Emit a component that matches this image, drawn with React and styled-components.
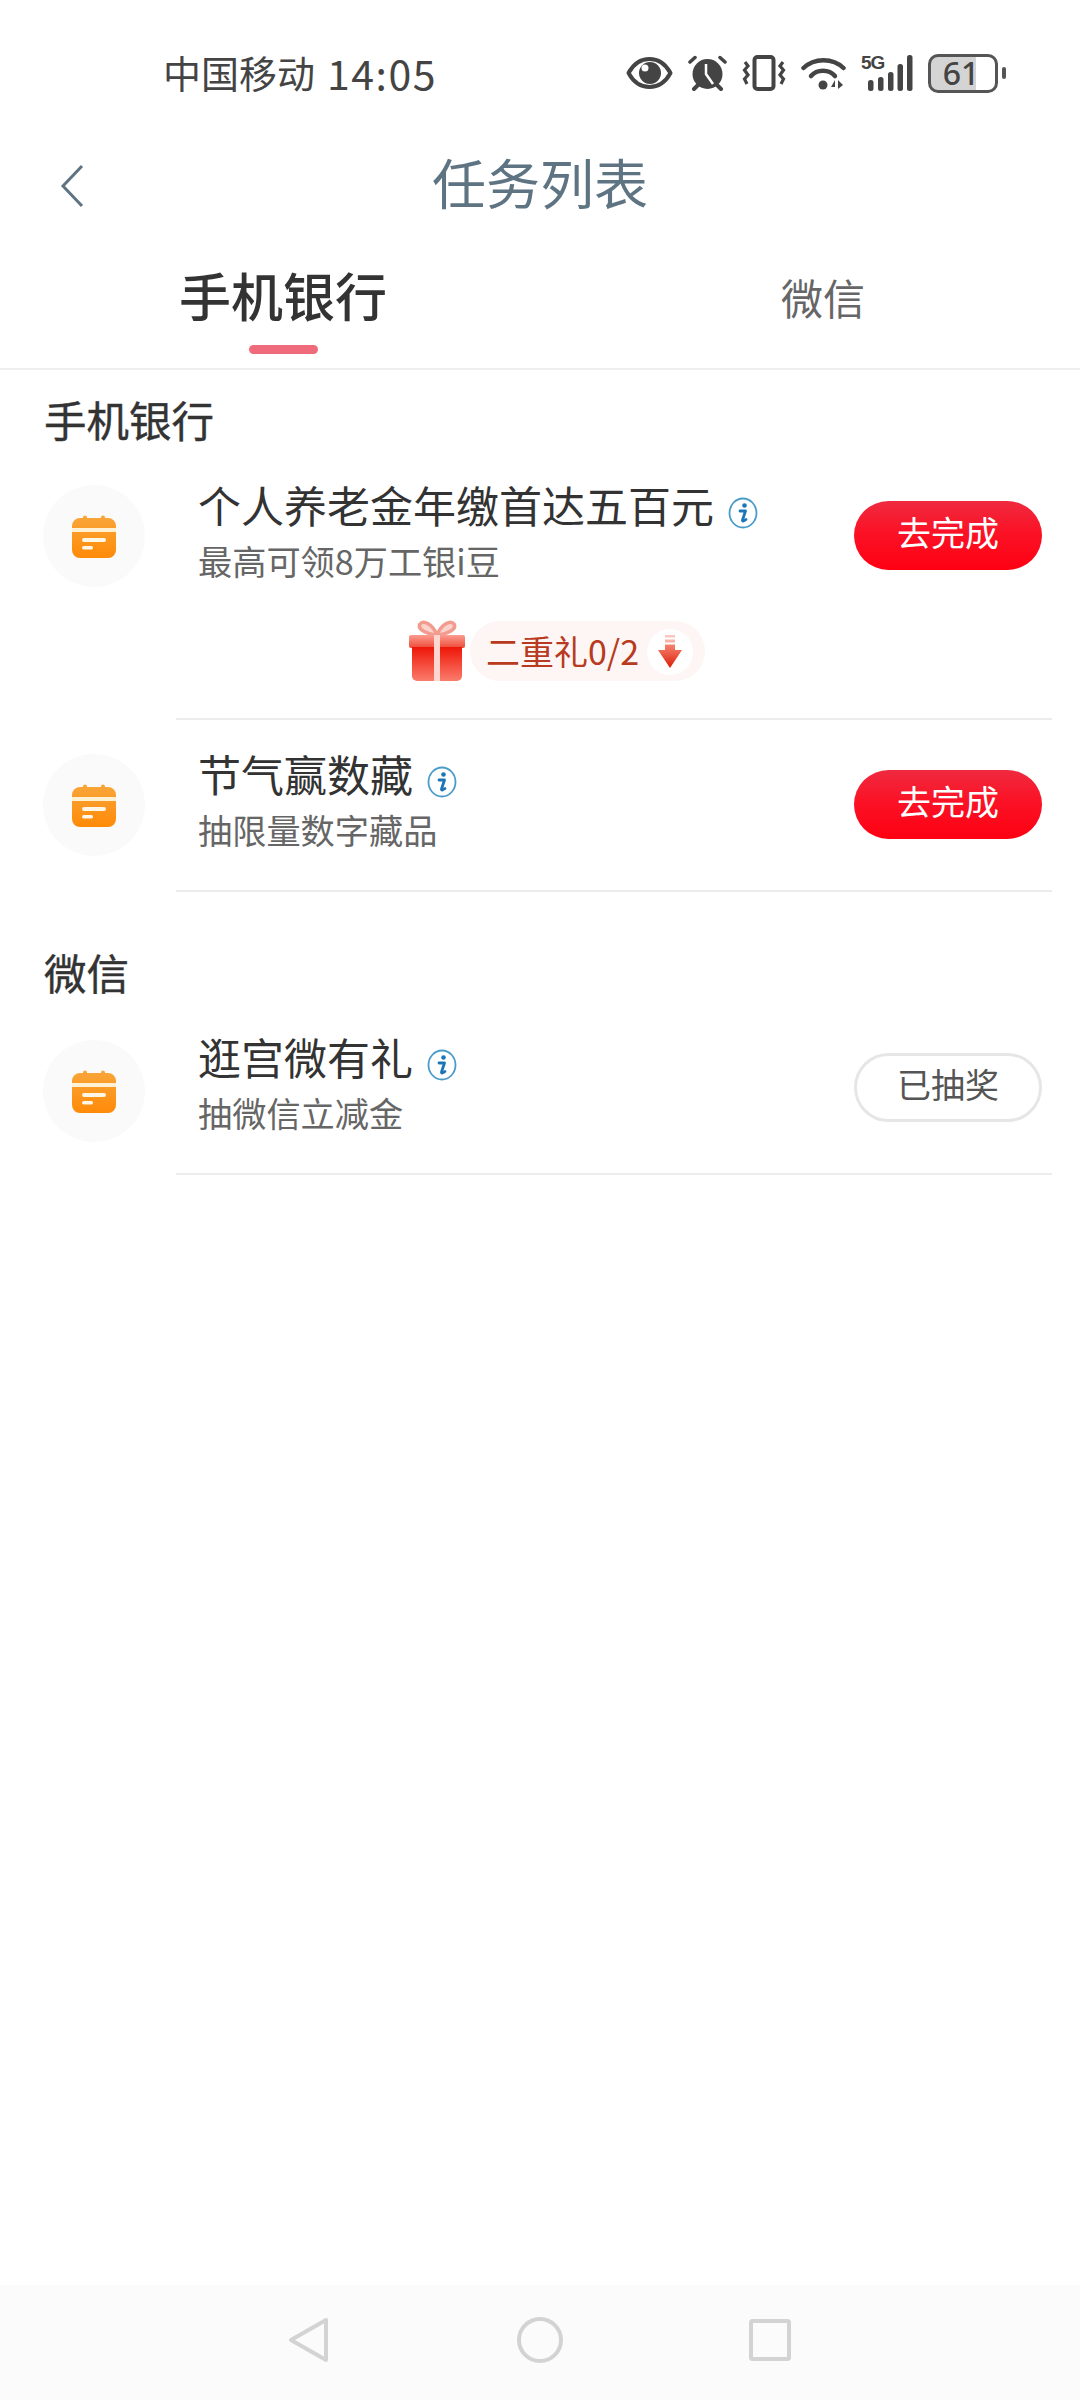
import React from 'react';
import styled, { createGlobalStyle } from 'styled-components';

const GlobalStyle = createGlobalStyle`
	html, body {
		margin: 0;
		padding: 0;
		background: #fff;
	}
	* {
		box-sizing: border-box;
	}
`;

const Page = styled.div`
	display: flex;
	flex-direction: column;
	width: 1080px;
	height: 2400px;
	overflow: hidden;
	background: #fff;
	font-family: 'Noto Sans CJK SC', 'Noto Sans', sans-serif;
	color: #333;
`;

const StatusBar = styled.div`
	display: flex;
	align-items: center;
	height: 146px;
	padding: 0 74px 0 163px;
	color: #444;
`;

const Carrier = styled.span`
	font-size: 38px;
	line-height: 46px;
	margin: 0 12px 3px 0;
`;

const Clock = styled.span`
	font-size: 41px;
	line-height: 46px;
	letter-spacing: 1.500px;
	margin-bottom: 3px;
`;

const StatusIcons = styled.div`
	display: flex;
	align-items: center;
	gap: 15px;
	margin-left: auto;
`;

const Signal = styled.div`
	position: relative;
	width: 52px;
	height: 36px;
`;

const SignalLabel = styled.span`
	position: absolute;
	left: 0;
	top: -2px;
	font-family: 'Liberation Sans', sans-serif;
	font-size: 19px;
	line-height: 20px;
	font-weight: 700;
	letter-spacing: -1px;
	color: #444;
`;

const Battery = styled.div`
	display: flex;
	align-items: center;
	justify-content: center;
	width: 70px;
	height: 39px;
	padding-right: 4px;
	border: 3px solid #555;
	border-radius: 10px;
	background: linear-gradient(90deg, #d4d4d4 70%, #fff 70%);
	font-family: 'Noto Sans', sans-serif;
	font-size: 32px;
	font-weight: 500;
	line-height: 1;
	color: #444;
`;

const BatteryNub = styled.div`
	width: 4px;
	height: 12px;
	margin-left: -11px;
	border-radius: 2px;
	background: #555;
`;

const TitleBar = styled.div`
	display: grid;
	grid-template-columns: 1fr auto 1fr;
	align-items: center;
	height: 74px;
	padding-left: 60px;
`;

const BackIcon = styled.svg`
	width: 24px;
	height: 44px;
	margin-top: 5px;
`;

const Title = styled.h1`
	margin: 0 60px 3px 0;
	font-size: 54px;
	font-weight: 400;
	line-height: 71px;
	color: #5f7482;
`;

const Tabs = styled.div`
	display: flex;
	height: 150px;
	border-bottom: 2px solid #eeeeee;
`;

const Tab = styled.div`
	display: flex;
	flex-direction: column;
	align-items: center;
	width: ${props => (props.$active ? 566 : 514)}px;
	padding-top: ${props => (props.$active ? 40 : 42)}px;
	font-size: ${props => (props.$active ? 52 : 42)}px;
	font-weight: ${props => (props.$active ? 500 : 400)};
	line-height: 70px;
	color: ${props => (props.$active ? '#333' : '#666')};
`;

const TabMark = styled.div`
	width: 69px;
	height: 9px;
	margin-top: 15px;
	border-radius: 5px;
	background: #ef6b7b;
`;

const Section = styled.section`
	margin-top: ${props => props.$gap || 0}px;
`;

const SectionTitle = styled.h2`
	margin: 0;
	padding: ${props => (props.$first ? '24px 0 7px 44px' : '0 0 6px 44px')};
	font-size: 42.500px;
	font-weight: 400;
	line-height: 50px;
	color: #333;
	-webkit-text-stroke: 0.4px #333;
`;

const Row = styled.div`
	display: flex;
	align-items: flex-start;
	padding-left: 43px;
`;

const IconCircle = styled.div`
	display: flex;
	align-items: center;
	justify-content: center;
	flex: none;
	width: 102px;
	height: 102px;
	margin: ${props => props.$top || 34}px 31px 0 0;
	border-radius: 50%;
	background: #fafafa;
`;

const RowBody = styled.div`
	flex: 1;
	margin-right: 28px;
	border-bottom: 2px solid #ececec;
`;

const RowMain = styled.div`
	display: flex;
	align-items: flex-start;
	justify-content: space-between;
	padding: 28px 10px ${props => (props.$tight ? 38 : 39)}px 22px;
`;

const TaskName = styled.div`
	display: flex;
	align-items: center;
	font-size: 43px;
	line-height: 50px;
	color: #333;
`;

const InfoIcon = styled.svg`
	flex: none;
	width: 30px;
	height: 32px;
	margin: 18px 0 0 14px;
`;

const TaskHint = styled.div`
	margin-top: 9px;
	font-size: 34.200px;
	line-height: 44px;
	color: #666;
`;

const ActionButton = styled.div`
	display: flex;
	align-items: center;
	justify-content: center;
	flex: none;
	width: 188px;
	height: 69px;
	margin-top: 22px;
	padding-bottom: 8px;
	border-radius: 35px;
	font-size: 34px;
	color: ${props => (props.$done ? '#555' : '#fff')};
	border: ${props => (props.$done ? '3px solid #e6e6e6' : 'none')};
	background: ${props => (props.$done ? '#fff' : 'linear-gradient(180deg, #ef2a3f 0%, #fb1226 45%, #fe0012 100%)')};
`;

const GiftRow = styled.div`
	display: flex;
	align-items: center;
	height: 62px;
	margin: 0 0 36px 232px;
`;

const GiftPill = styled.div`
	display: flex;
	align-items: center;
	height: 60px;
	margin-left: 4px;
	padding: 0 12px 1px 16px;
	border-radius: 30px;
	background: #fef6f4;
	font-size: 34px;
	color: #b83a20;
`;

const ArrowDot = styled.div`
	display: flex;
	align-items: center;
	justify-content: center;
	width: 46px;
	height: 46px;
	margin: 3px 0 0 8px;
	border-radius: 50%;
	background: #fff;
`;

const NavBar = styled.div`
	display: flex;
	align-items: center;
	justify-content: space-between;
	height: 115px;
	margin-top: auto;
	padding: 0 289px 5px 288px;
	background: #fbfbfb;
`;

const StatusEye = () => (
	<svg width="47" height="32" viewBox="0 0 47 32">
		<path d="M2.500 16C8 6 15 2 23.500 2S39 6 44.500 16C39 26 32 30 23.500 30S8 26 2.500 16Z" fill="none" stroke="#444" strokeWidth="4" strokeLinejoin="round" />
		<circle cx="24" cy="16" r="11" fill="#444" />
		<circle cx="19" cy="11" r="3.500" fill="#fff" />
	</svg>
);

const StatusAlarm = () => (
	<svg width="39" height="36" viewBox="0 0 39 36">
		<circle cx="19.500" cy="19" r="15" fill="#444" />
		<path d="M18 9V19L25 29" fill="none" stroke="#fff" strokeWidth="2.500" />
		<path d="M2 7L7 2.500M37 7L32 2.500" stroke="#444" strokeWidth="3.500" strokeLinecap="round" />
		<path d="M6 34L10 30M33 34L29 30" stroke="#444" strokeWidth="4" strokeLinecap="round" />
	</svg>
);

const StatusVibrate = () => (
	<svg width="44" height="36" viewBox="0 0 44 36">
		<rect x="12.500" y="2" width="19" height="32" rx="3" fill="none" stroke="#444" strokeWidth="4" />
		<path d="M3 7L6 11L2.500 15L6 20L2.500 24L5 29M41 7L38 11L41.500 15L38 20L41.500 24L39 29" fill="none" stroke="#444" strokeWidth="3.200" />
	</svg>
);

const StatusWifi = () => (
	<svg width="45" height="34" viewBox="0 0 45 34">
		<path d="M2.500 12C13 1.500 32 1.500 42.500 12" fill="none" stroke="#444" strokeWidth="4.500" strokeLinecap="round" />
		<path d="M10 20C16 13 28 13 34 20" fill="none" stroke="#444" strokeWidth="4.500" strokeLinecap="round" />
		<circle cx="22" cy="29" r="4.500" fill="#444" />
		<path d="M34 24L30 31H34ZM37 24V33L42 29Z" fill="#444" />
	</svg>
);

const SignalBars = () => (
	<svg width="52" height="36" viewBox="0 0 52 36">
		<rect x="7" y="25" width="5.500" height="11" rx="2.500" fill="#444" />
		<rect x="17" y="22" width="5.500" height="14" rx="2.500" fill="#444" />
		<rect x="27" y="17" width="5.500" height="19" rx="2.500" fill="#444" />
		<rect x="36.500" y="9" width="5.500" height="27" rx="2.500" fill="#444" />
		<rect x="46" y="0" width="5.500" height="36" rx="2.500" fill="#444" />
	</svg>
);

const BackChevron = () => (
	<BackIcon viewBox="0 0 24 44">
		<path d="M22 2L3 22L22 42" fill="none" stroke="#5f7482" strokeWidth="3" />
	</BackIcon>
);

const CalendarIcon = ({ id }) => (
	<svg width="46" height="46" viewBox="0 0 46 46">
		<defs>
			<linearGradient id={id} x1="0" y1="0" x2="0" y2="1">
				<stop offset="0" stopColor="#f8a63a" />
				<stop offset="1" stopColor="#ff8a08" />
			</linearGradient>
		</defs>
		<path d="M12 4.500a2 2 0 0 1 4 0V5H30v-.500a2 2 0 0 1 4 0V5h3a8 8 0 0 1 8 8V37a8 8 0 0 1-8 8H9a8 8 0 0 1-8-8V13a8 8 0 0 1 8-8h3Z" fill={`url(#${id})`} />
		<rect x="1" y="15" width="44" height="4" fill="#fff1d2" />
		<rect x="11" y="25" width="24" height="4" rx="2" fill="#fff6e6" />
		<rect x="11" y="33" width="11" height="3.500" rx="1.700" fill="#fff6e6" />
	</svg>
);

const Info = () => (
	<InfoIcon viewBox="0 0 30 32">
		<ellipse cx="15" cy="16" rx="13.500" ry="14.500" fill="#fff" stroke="#4a9bc9" strokeWidth="1.800" />
		<circle cx="16.500" cy="8.500" r="2.300" fill="#1c75b8" />
		<path d="M12 14H17.500L14.500 23C14.200 24.300 15.500 24.500 18 22.500" fill="none" stroke="#1c75b8" strokeWidth="2.800" strokeLinecap="round" strokeLinejoin="round" />
	</InfoIcon>
);

const GiftIcon = () => (
	<svg width="58" height="62" viewBox="0 0 58 62">
		<defs>
			<linearGradient id="giftLid" x1="0" y1="0" x2="0" y2="1">
				<stop offset="0" stopColor="#fb9d90" />
				<stop offset="1" stopColor="#ee4a38" />
			</linearGradient>
			<linearGradient id="giftBox" x1="0" y1="0" x2="0" y2="1">
				<stop offset="0" stopColor="#ee1608" />
				<stop offset="1" stopColor="#fb7c6c" />
			</linearGradient>
		</defs>
		<path d="M29 15C24 3 15 0 12 4C9 9 18 14 29 15C40 14 49 9 46 4C43 0 34 3 29 15Z" fill="#fbd3cc" stroke="#f29c90" strokeWidth="3.500" />
		<rect x="1" y="15" width="56" height="13" rx="2" fill="url(#giftLid)" />
		<path d="M4 27H54V56a5 5 0 0 1-5 5H9a5 5 0 0 1-5-5Z" fill="url(#giftBox)" />
		<rect x="26" y="15" width="6" height="46" fill="#fcd6cf" />
	</svg>
);

const DownArrow = () => (
	<svg width="26" height="34" viewBox="0 0 26 34">
		<defs>
			<linearGradient id="arrowFill" x1="0" y1="0" x2="0" y2="1">
				<stop offset="0" stopColor="#f6846f" />
				<stop offset="1" stopColor="#dc1d08" />
			</linearGradient>
		</defs>
		<rect x="8" y="0" width="10" height="2.500" fill="#f8c8bf" />
		<rect x="8" y="4.500" width="10" height="3" fill="#f6b3a6" />
		<path d="M8 9.500H18V15H25L13 33L1 15H8Z" fill="url(#arrowFill)" />
	</svg>
);

const NavBack = () => (
	<svg width="42" height="46" viewBox="0 0 42 46">
		<path d="M38 3V43L3 23Z" fill="none" stroke="#d3d3d3" strokeWidth="4" strokeLinejoin="round" />
	</svg>
);

const NavHome = () => (
	<svg width="46" height="46" viewBox="0 0 46 46">
		<circle cx="23" cy="23" r="21" fill="none" stroke="#d3d3d3" strokeWidth="4" />
	</svg>
);

const NavRecent = () => (
	<svg width="42" height="42" viewBox="0 0 42 42">
		<rect x="2" y="2" width="38" height="38" rx="1.500" fill="none" stroke="#d3d3d3" strokeWidth="4" />
	</svg>
);

const Task = ({ id, name, hint, action, done, iconTop, children }) => (
	<Row>
		<IconCircle $top={iconTop}>
			<CalendarIcon id={id} />
		</IconCircle>
		<RowBody>
			<RowMain $tight={!!children}>
				<div>
					<TaskName>
						{name}
						<Info />
					</TaskName>
					<TaskHint>{hint}</TaskHint>
				</div>
				<ActionButton $done={done}>{action}</ActionButton>
			</RowMain>
			{children}
		</RowBody>
	</Row>
);

const App = () => (
	<Page>
		<GlobalStyle />
		<StatusBar>
			<Carrier>中国移动</Carrier>
			<Clock>14:05</Clock>
			<StatusIcons>
				<StatusEye />
				<StatusAlarm />
				<StatusVibrate />
				<StatusWifi />
				<Signal>
					<SignalBars />
					<SignalLabel>5G</SignalLabel>
				</Signal>
				<Battery>61</Battery>
				<BatteryNub />
			</StatusIcons>
		</StatusBar>
		<TitleBar>
			<BackChevron />
			<Title>任务列表</Title>
		</TitleBar>
		<Tabs>
			<Tab $active>
				手机银行
				<TabMark />
			</Tab>
			<Tab>微信</Tab>
		</Tabs>
		<Section>
			<SectionTitle $first>手机银行</SectionTitle>
			<Task id="cal1" name="个人养老金年缴首达五百元" hint="最高可领8万工银i豆" action="去完成">
				<GiftRow>
					<GiftIcon />
					<GiftPill>
						二重礼0/2
						<ArrowDot>
							<DownArrow />
						</ArrowDot>
					</GiftPill>
				</GiftRow>
			</Task>
			<Task id="cal2" name="节气赢数藏" hint="抽限量数字藏品" action="去完成" />
		</Section>
		<Section $gap={55}>
			<SectionTitle>微信</SectionTitle>
			<Task id="cal3" name="逛宫微有礼" hint="抽微信立减金" action="已抽奖" iconTop={37} done />
		</Section>
		<NavBar>
			<NavBack />
			<NavHome />
			<NavRecent />
		</NavBar>
	</Page>
);

export default App;
